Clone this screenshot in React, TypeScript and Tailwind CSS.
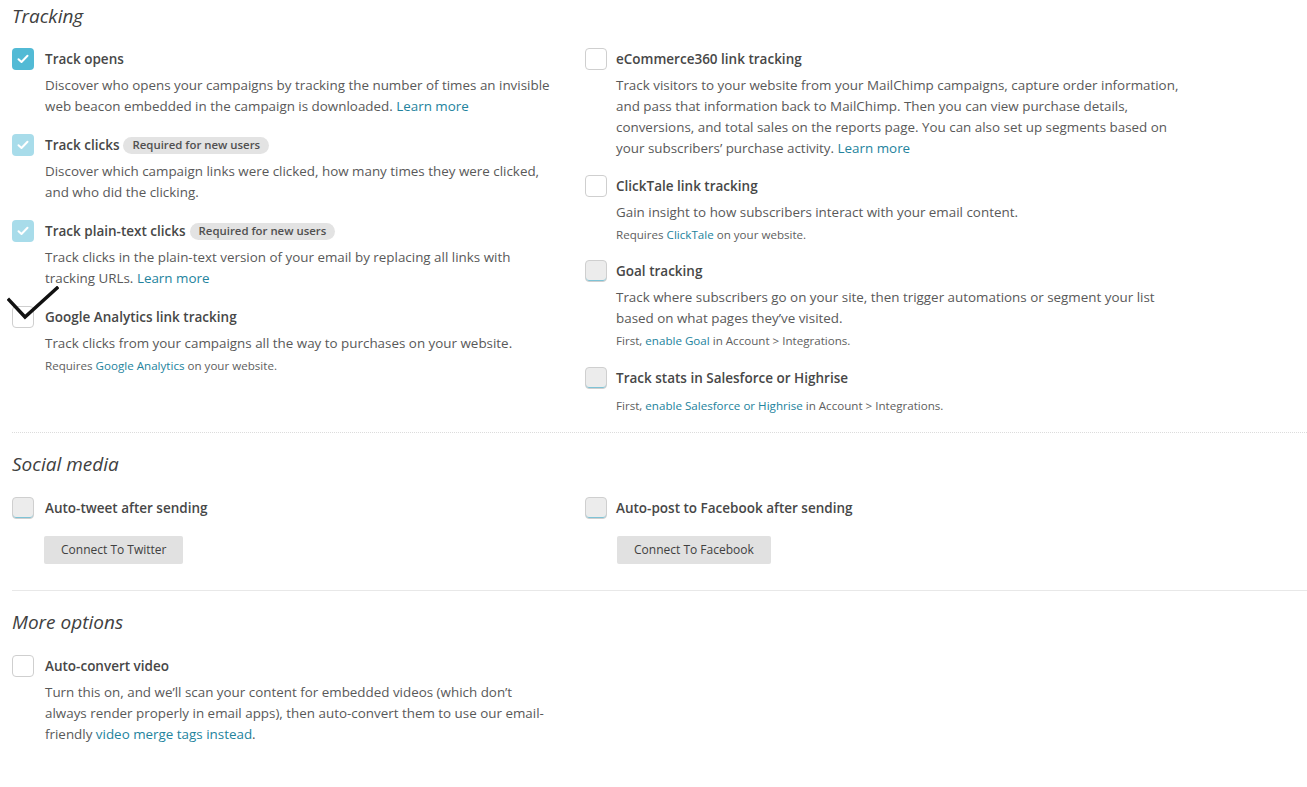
import React from "react";

type BoxState = "on" | "locked" | "off" | "muted";

function Box({ state }: { state: BoxState }) {
  if (state === "on" || state === "locked") {
    return (
      <span
        className={
          "flex h-[22px] w-[22px] shrink-0 items-center justify-center rounded-[4px] " +
          (state === "on" ? "bg-[#52bad5]" : "bg-[#a8dcea]")
        }
      >
        <svg width="12" height="10" viewBox="0 0 12 10" fill="none">
          <path d="M1.5 5.2 4.5 8 10.5 1.8" stroke="white" strokeWidth="2" strokeLinecap="round" strokeLinejoin="round" />
        </svg>
      </span>
    );
  }
  return (
    <span
      className={
        "block h-[22px] w-[22px] shrink-0 rounded-[4px] border border-[#cfcfcf] " +
        (state === "muted" ? "bg-[#ececec] shadow-[inset_0_-1px_0_#7ec3d6]" : "bg-white")
      }
    />
  );
}

function Badge() {
  return (
    <span className="ml-[4px] inline-flex h-[17px] items-center rounded-full bg-[#e3e3e3] px-[9px] text-[11.4px] font-semibold text-[#505050]">
      Required for new users
    </span>
  );
}

function A({ children }: { children: React.ReactNode }) {
  return <span className="text-[#23839d]">{children}</span>;
}

interface ItemProps {
  state: BoxState;
  label: string;
  badge?: boolean;
  children?: React.ReactNode;
  note?: React.ReactNode;
  noteGap?: string;
  width: string;
  gap?: string;
}

function Item({ state, label, badge, children, note, noteGap, width, gap }: ItemProps) {
  return (
    <div className={"flex " + (gap ?? "gap-[11px]")}>
      <Box state={state} />
      <div className={width}>
        <div className="flex h-[22px] items-center text-[13.5px] font-semibold leading-[20px] text-[#474747]">
          {label}
          {badge && <Badge />}
        </div>
        {children && (
          <p className="mt-[5px] text-[13.4px] leading-[21px] text-[#595959]">{children}</p>
        )}
        {note && (
          <p className={(noteGap ?? "mt-[3px]") + " text-[11.6px] leading-[18px] text-[#606060]"}>{note}</p>
        )}
      </div>
    </div>
  );
}

function Heading({ children }: { children: React.ReactNode }) {
  return <h2 className="text-[19px] italic leading-[28px] text-[#404040]">{children}</h2>;
}

function ConnectButton({ children }: { children: React.ReactNode }) {
  return (
    <button className="ml-[32px] mt-[17px] h-[28px] rounded-[2px] bg-[#e1e1e1] px-[17px] text-[12px] text-[#404040]">
      {children}
    </button>
  );
}

const LEFT = "w-[515px]";
const RIGHT = "w-[578px]";

export default function App() {
  return (
    <div className="relative min-h-[787px] bg-white pl-[12px] pt-[2px] font-['Open_Sans',sans-serif]">
      <section>
        <Heading>Tracking</Heading>
        <div className="mt-[18px] flex">
          <div className="flex w-[573px] flex-col gap-[17px]">
            <Item state="on" label="Track opens" width={LEFT}>
              Discover who opens your campaigns by tracking the number of times an invisible web beacon embedded in
              the campaign is downloaded. <A>Learn more</A>
            </Item>
            <Item state="locked" label="Track clicks" badge width={LEFT}>
              Discover which campaign links were clicked, how many times they were clicked, and who did the clicking.
            </Item>
            <Item state="locked" label="Track plain-text clicks" badge width={LEFT}>
              Track clicks in the plain-text version of your email by replacing all links with tracking URLs.{" "}
              <A>Learn more</A>
            </Item>
            <Item
              state="off"
              label="Google Analytics link tracking"
              width={LEFT}
              note={
                <>
                  Requires <A>Google Analytics</A> on your website.
                </>
              }
            >
              Track clicks from your campaigns all the way to purchases on your website.
            </Item>
          </div>
          <div className="flex flex-col gap-[16px]">
            <Item state="off" label="eCommerce360 link tracking" width={RIGHT} gap="gap-[9px]">
              Track visitors to your website from your MailChimp campaigns, capture order information, and pass that
              information back to MailChimp. Then you can view purchase details, conversions, and total sales on the
              reports page. You can also set up segments based on your subscribers’ purchase activity.{" "}
              <A>Learn more</A>
            </Item>
            <Item
              state="off"
              label="ClickTale link tracking"
              width={RIGHT}
              gap="gap-[9px]"
              note={
                <>
                  Requires <A>ClickTale</A> on your website.
                </>
              }
            >
              Gain insight to how subscribers interact with your email content.
            </Item>
            <Item
              state="muted"
              label="Goal tracking"
              width={RIGHT}
              gap="gap-[9px]"
              note={
                <>
                  First, <A>enable Goal</A> in Account &gt; Integrations.
                </>
              }
            >
              Track where subscribers go on your site, then trigger automations or segment your list based on what
              pages they’ve visited.
            </Item>
            <div className="pt-[1px]">
              <Item
                state="muted"
                label="Track stats in Salesforce or Highrise"
                width={RIGHT}
                gap="gap-[9px]"
                noteGap="mt-[8px]"
                note={
                  <>
                    First, <A>enable Salesforce or Highrise</A> in Account &gt; Integrations.
                  </>
                }
              />
            </div>
          </div>
        </div>
      </section>

      <div className="mt-[17px] border-t border-dotted border-[#dcdcdc]" />

      <section className="pt-[17px]">
        <Heading>Social media</Heading>
        <div className="mt-[19px] flex">
          <div className="w-[573px]">
            <Item state="muted" label="Auto-tweet after sending" width={LEFT} />
            <ConnectButton>Connect To Twitter</ConnectButton>
          </div>
          <div>
            <Item state="muted" label="Auto-post to Facebook after sending" width={RIGHT} gap="gap-[9px]" />
            <ConnectButton>Connect To Facebook</ConnectButton>
          </div>
        </div>
      </section>

      <div className="mt-[26px] border-t border-[#e8e8e8]" />

      <section className="pt-[17px]">
        <Heading>More options</Heading>
        <div className="mt-[19px]">
          <Item state="off" label="Auto-convert video" width="w-[506px]">
            Turn this on, and we’ll scan your content for embedded videos (which don’t always render properly in
            email apps), then auto-convert them to use our email-friendly <A>video merge tags instead</A>.
          </Item>
        </div>
      </section>

      {/* stray check mark over the analytics box */}
      <svg className="absolute left-[7px] top-[286px]" width="52" height="34" viewBox="0 0 52 34" fill="none">
        <path d="M2 14 18 31 50 2" stroke="#111" strokeWidth="3.4" strokeLinecap="square" />
      </svg>
    </div>
  );
}
